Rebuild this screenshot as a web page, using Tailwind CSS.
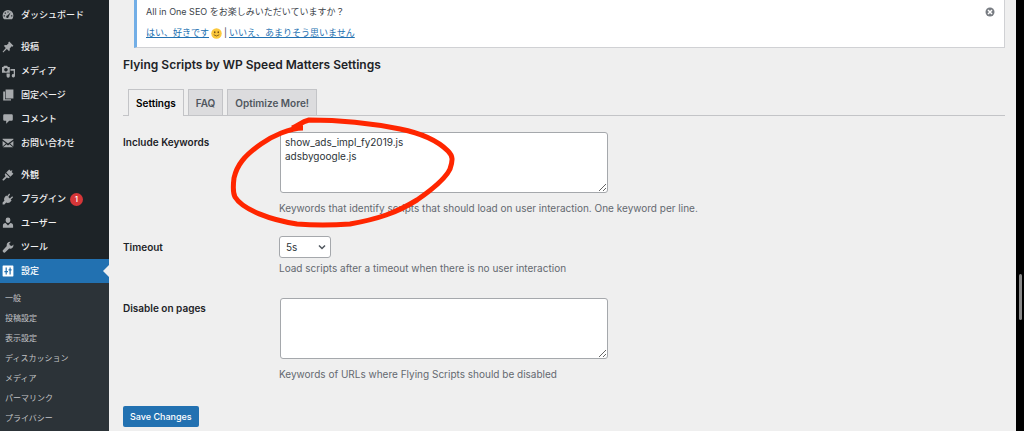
<!DOCTYPE html>
<html lang="ja">
<head>
<meta charset="utf-8">
<meta name="viewport" content="width=device-width, initial-scale=1">
<title>Flying Scripts Settings</title>
<script src="https://cdn.jsdelivr.net/npm/@tailwindcss/browser@4"></script>
</head>
<body class="flex h-screen overflow-hidden bg-[#efefef] font-['Inter','Noto_Sans_CJK_JP',sans-serif] text-[10px] leading-4 text-[#3c434a]">
<nav class="flex w-[109px] shrink-0 flex-col bg-[#1d2327] pt-[3px] text-[9px] font-medium text-[#f0f0f1]">
  <ul>
    <li><a href="#" class="flex h-6 items-center gap-[7px] pl-[2px]"><svg class="size-3 shrink-0 fill-[#a7aaad]" viewBox="0 0 20 20"><path fill-rule="evenodd" d="M3.5 17A9 9 0 1 1 16.500 17ZM9 4v2h2V4ZM4.500 6v2h2V6ZM2.800 10.500v2h2v-2ZM15.200 10.500v2h2v-2ZM14.500 5.500 9 11a2 2 0 1 0 2 2Z"/></svg>ダッシュボード</a></li>
    <li class="mt-2"><a href="#" class="flex h-6 items-center gap-[7px] pl-[2px]"><svg class="size-3 shrink-0 fill-[#a7aaad]" viewBox="0 0 20 20"><path d="M12 1l7 7-1.500 1.500-1.300-.6-3.400 3.500c.5 1.700.1 3.400-1 4.600l-3.700-3.700L2 19l-1-1 5.300-6.500L3 8c1.400-1.100 3-1.400 4.600-1L11 3.700l-.6-1.200Z"/></svg>投稿</a></li>
    <li><a href="#" class="flex h-6 items-center gap-[7px] pl-[2px]"><svg class="size-[13px] -mr-px shrink-0 fill-[#a7aaad]" viewBox="0 0 20 20"><path fill-rule="evenodd" d="M0 3h2l1-2h5l1 2h3v9H0ZM6 4.500a2.700 2.700 0 1 0 .1 0ZM13 6h7v10.500a2.500 2.500 0 1 1-2-2.400V9h-5ZM7 13h5v4a2.500 2.500 0 1 1-5 0Z"/></svg>メディア</a></li>
    <li><a href="#" class="flex h-6 items-center gap-[7px] pl-[2px]"><svg class="size-3 shrink-0 fill-[#a7aaad]" viewBox="0 0 20 20"><path d="M6 1h13v15H6ZM2 4h3v13h10v2H2Z"/></svg>固定ページ</a></li>
    <li><a href="#" class="flex h-6 items-center gap-[7px] pl-[2px]"><svg class="size-3 shrink-0 fill-[#a7aaad]" viewBox="0 0 20 20"><path d="M4 2h12a2 2 0 0 1 2 2v7a2 2 0 0 1-2 2h-4l-5 5v-5H4a2 2 0 0 1-2-2V4a2 2 0 0 1 2-2Z"/></svg>コメント</a></li>
    <li><a href="#" class="flex h-6 items-center gap-[7px] pl-[2px]"><svg class="size-3 shrink-0 fill-[#a7aaad]" viewBox="0 0 20 20"><path d="M1 3h18v1l-9 7-9-7ZM1 6.500l5.500 4.500L1 16ZM19 6.500V16l-5.500-5ZM7.500 12l2.500 2 2.500-2 6 5H1.500Z"/></svg>お問い合わせ</a></li>
    <li class="mt-2"><a href="#" class="flex h-6 items-center gap-[7px] pl-[2px]"><svg class="size-3 shrink-0 fill-[#a7aaad]" viewBox="0 0 20 20"><path d="M12 1l2.500 2.500 2-1.500 1 1-1.500 2L19 8l-5 5-7-7ZM6 7l7 7-2 1.500-3-1.500-5 5c-1 1-3-1-2-2l5-5-1.500-3Z"/></svg>外観</a></li>
    <li><a href="#" class="flex h-6 items-center gap-[7px] pl-[2px]"><svg class="size-3 shrink-0 fill-[#a7aaad]" viewBox="0 0 20 20"><path d="M12 1l1.500 1.500-3 4 2.500 2.500 4-3.500L18.500 7l-4 4 1.500 1.500c-3 4-6 5-9 3.500L4 19H1v-3l3-3C2.500 10 4 6.500 7 4l1.500 1.500Z"/></svg>プラグイン<span class="-ml-[3px] flex size-[13px] items-center justify-center rounded-full bg-[#d63638] text-[8px] text-white">1</span></a></li>
    <li><a href="#" class="flex h-6 items-center gap-[7px] pl-[2px]"><svg class="size-3 shrink-0 fill-[#a7aaad]" viewBox="0 0 20 20"><path d="M10 1a4 4 0 0 1 4 4c0 3-2 5-4 5S6 8 6 5a4 4 0 0 1 4-4ZM6 10l4 4 4-4c3 .5 4.500 2 4.500 4v4h-17v-4c0-2 1.500-3.500 4.500-4Z"/></svg>ユーザー</a></li>
    <li><a href="#" class="flex h-6 items-center gap-[7px] pl-[2px]"><svg class="size-3 shrink-0 fill-[#a7aaad]" viewBox="0 0 20 20"><path d="M16.500 8.500 19 6c.5 5-3 7.500-7 6.500L5 19c-2 1.500-5-1.500-3.500-3.500L8 8.500C7 4.500 10 1 14.500 1.500L12 4l1 3Z"/></svg>ツール</a></li>
    <li class="bg-[#2271b1]"><a href="#" aria-current="page" class="flex h-6 items-center gap-[7px] pl-[2px] text-white"><svg class="size-3 shrink-0 fill-white" viewBox="0 0 20 20"><path fill-rule="evenodd" d="M2 1h16a1 1 0 0 1 1 1v16a1 1 0 0 1-1 1H2a1 1 0 0 1-1-1V2a1 1 0 0 1 1-1ZM6 4v6H4v2h2v4h2v-4h2v-2H8V4ZM12.500 4v3H11v2h1.500v7h2V9H16V7h-1.500V4Z"/></svg>設定<svg class="ml-auto h-3 w-[6px] fill-[#efefef]" viewBox="0 0 6 12"><path d="M6 0v12L0 6Z"/></svg></a></li>
  </ul>
  <ul class="flex-1 bg-[#2c3338] pt-[5px] pl-[5px] text-[8px] font-normal text-[#c3c4c7]">
    <li><a href="#" class="flex h-5 items-center">一般</a></li>
    <li><a href="#" class="flex h-5 items-center">投稿設定</a></li>
    <li><a href="#" class="flex h-5 items-center">表示設定</a></li>
    <li><a href="#" class="flex h-5 items-center">ディスカッション</a></li>
    <li><a href="#" class="flex h-5 items-center">メディア</a></li>
    <li><a href="#" class="flex h-5 items-center">パーマリンク</a></li>
    <li><a href="#" class="flex h-5 items-center">プライバシー</a></li>
  </ul>
</nav>

<main class="relative min-w-0 flex-1 pr-[11px] pl-[14px]">
  <section class="ml-[11px] flex h-12 items-start justify-between border-r border-b border-l-[3px] border-[#d0d1d4] border-l-[#72aee6] bg-white pr-[9px] pl-[9px] text-[9px]">
    <div>
      <p class="pt-1">All in One SEO をお楽しみいただいていますか？</p>
      <p class="flex items-center gap-[2px] pt-[5px] text-[#2271b1]"><a href="#" class="underline">はい、好きです</a>
        <svg class="size-[11px]" viewBox="0 0 22 22" role="img" aria-label="smile"><circle cx="11" cy="11" r="10.500" fill="#fbc83c"/><ellipse cx="7.500" cy="8.500" rx="1.500" ry="2" fill="#6b4713"/><ellipse cx="14.500" cy="8.500" rx="1.500" ry="2" fill="#6b4713"/><path d="M5.500 13.500q5.500 5 11 0" fill="none" stroke="#6b4713" stroke-width="1.500"/></svg>
        <span class="text-[#3c434a]">|</span><a href="#" class="underline">いいえ、あまりそう思いません</a></p>
    </div>
    <button aria-label="閉じる" class="mt-[7px]"><svg class="size-[10px]" viewBox="0 0 20 20"><circle cx="10" cy="10" r="9" fill="#787c82"/><path d="M6 6l8 8M14 6l-8 8" stroke="#fff" stroke-width="3"/></svg></button>
  </section>

  <h1 class="mt-[9px] text-[12px] font-semibold text-[#1d2327]">Flying Scripts by WP Speed Matters Settings</h1>

  <div class="mt-4 flex gap-1 border-b border-[#c3c4c7] pl-[5px] text-[10px] font-semibold text-[#50575e]" role="tablist">
    <button role="tab" aria-selected="true" class="-mb-px h-[27px] border border-b-0 border-[#c3c4c7] bg-[#efefef] px-[7px] text-black">Settings</button>
    <button role="tab" class="h-[26px] border border-b-0 border-[#c3c4c7] bg-[#dcdcde] px-[7px]">FAQ</button>
    <button role="tab" class="h-[26px] border border-b-0 border-[#c3c4c7] bg-[#dcdcde] px-[7px]">Optimize More!</button>
  </div>

  <form class="pt-4">
    <div class="grid grid-cols-[156px_1fr] gap-y-[18px]">
      <label for="keywords" class="pt-[2px] font-semibold text-[#1d2327]">Include Keywords</label>
      <div class="text-[#646970]">
        <textarea id="keywords" class="ml-px block h-[61px] w-[328px] max-w-full rounded-[3px] border border-[#a5a8ac] bg-white px-1 py-[2px] leading-[14px] text-[#2c3338]">show_ads_impl_fy2019.js
adsbygoogle.js</textarea>
        <p class="mt-[7px]">Keywords that identify scripts that should load on user interaction. One keyword per line.</p>
      </div>
      <label for="timeout" class="mt-[2px] pt-[3px] font-semibold text-[#1d2327]">Timeout</label>
      <div class="mt-[2px] text-[#646970]">
        <div class="relative w-[52px]">
          <select id="timeout" class="block h-[22px] w-full appearance-none rounded-[3px] border border-[#a5a8ac] bg-white pl-[6px] text-[#2c3338]"><option>5s</option></select>
          <svg class="pointer-events-none absolute top-[7px] right-[5px] size-2 fill-none stroke-[#50575e] stroke-[1.500]" viewBox="0 0 8 8"><path d="M1 2.500 4 5.500 7 2.500"/></svg>
        </div>
        <p class="mt-[2px]">Load scripts after a timeout when there is no user interaction</p>
      </div>
      <label for="pages" class="mt-1 pt-[2px] font-semibold text-[#1d2327]">Disable on pages</label>
      <div class="mt-1 text-[#646970]">
        <textarea id="pages" class="ml-px block h-[61px] w-[328px] max-w-full rounded-[3px] border border-[#a5a8ac] bg-white px-1 py-[2px] leading-[14px] text-[#2c3338]"></textarea>
        <p class="mt-[7px]">Keywords of URLs where Flying Scripts should be disabled</p>
      </div>
    </div>
    <button type="submit" class="mt-6 h-[21px] rounded-[2px] bg-[#2271b1] px-[7px] text-[9px] font-medium text-white">Save Changes</button>
  </form>

  <svg class="pointer-events-none absolute top-[110px] left-[121px] h-[120px] w-[230px] fill-none stroke-[#ff2600] stroke-[5]" viewBox="230 110 230 120" stroke-linejoin="round"><path d="M303 128C290 128 272 136 261 144C244 156 237 165 234 178C233 186 233 193 235 197C243 210 271 220 297 224Q322 226 350 224C378 219 396 213 417 200C430 191 445 180 450 169C453 160 453 156 448 151C438 141 420 133 400 129C370 123 335 120 309 120C301 122 298 126 292 128"/></svg>
</main>

<aside class="w-2 shrink-0 bg-black pt-[274px] pl-[3px]" aria-hidden="true"><div class="h-[46px] w-[3px] rounded-full bg-[#8a8a8a]"></div></aside>
</body>
</html>
